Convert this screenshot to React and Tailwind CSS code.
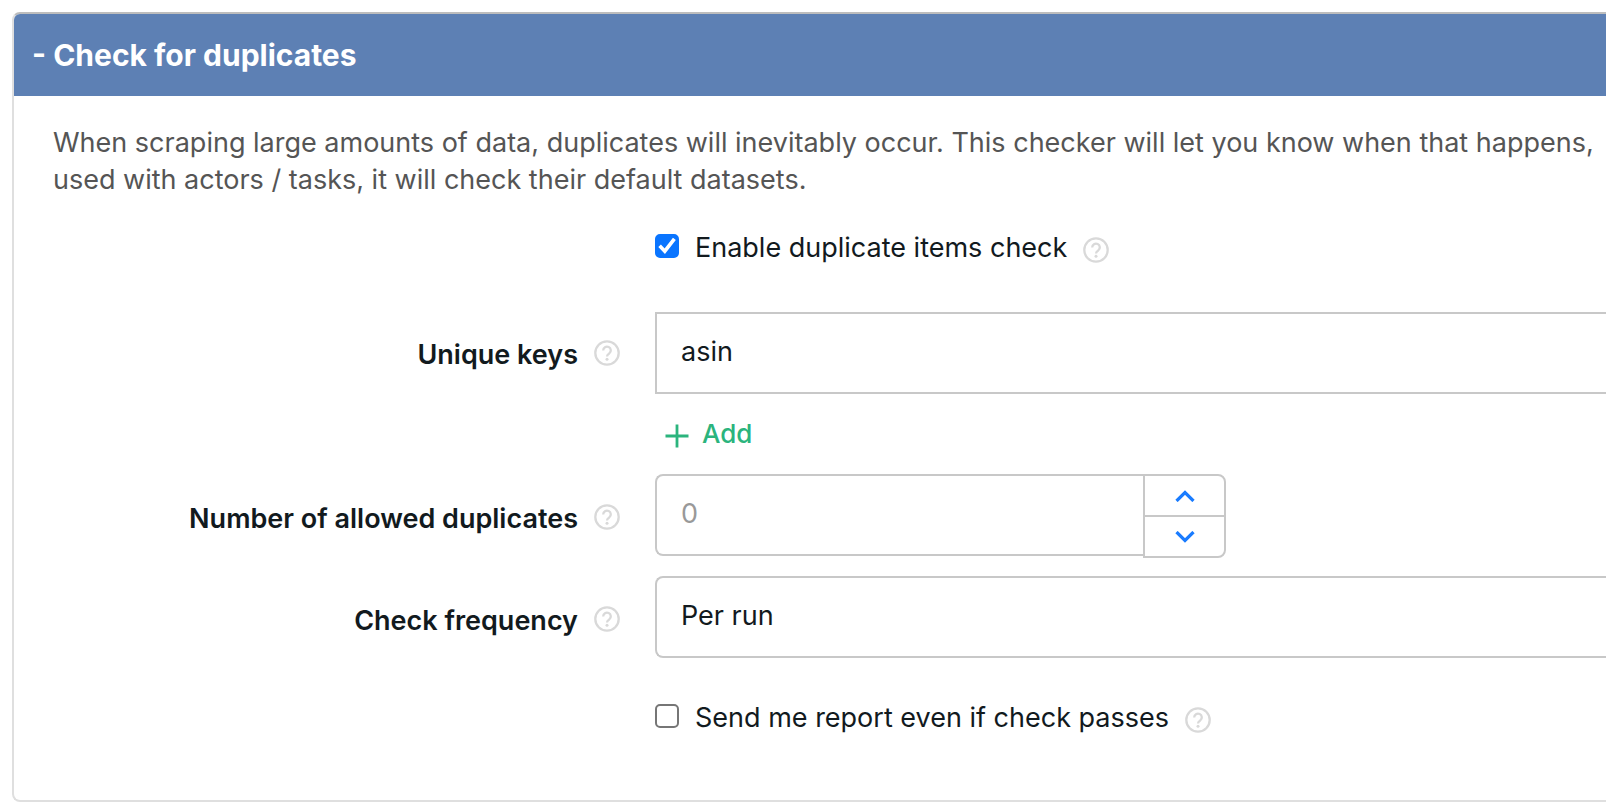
import { useState } from "react";

function HelpIcon() {
  return (
    <svg viewBox="0 0 26 26" className="size-[26px] shrink-0 text-[#d9d9d9]" fill="none" stroke="currentColor" aria-hidden="true">
      <circle cx="13" cy="13" r="11.7" strokeWidth="2.3" />
      <path d="M9.2 10.4a3.8 3.8 0 1 1 6.1 3c-1.5 1-2.3 1.5-2.3 3" strokeWidth="2.3" />
      <circle cx="13" cy="19.2" r="1.5" fill="currentColor" stroke="none" />
    </svg>
  );
}

function FieldLabel({ htmlFor, children }) {
  return (
    <div className="flex h-[82px] items-center justify-end gap-4 pr-[35px]">
      <label htmlFor={htmlFor} className="pt-1 font-semibold">
        {children}
      </label>
      <HelpIcon />
    </div>
  );
}

function CheckField({ id, checked, onChange, children }) {
  return (
    <div className="col-start-2 flex h-9 items-center">
      <input
        id={id}
        type="checkbox"
        checked={checked}
        onChange={onChange}
        className="peer size-6 shrink-0 appearance-none rounded-[5px] border-2 border-[#767676] bg-white checked:border-[#0a75ff] checked:bg-[#0a75ff]"
      />
      <svg viewBox="0 0 24 24" className="pointer-events-none -ml-6 size-6 shrink-0 opacity-0 peer-checked:opacity-100" fill="none" stroke="#fff" strokeWidth="3.6" aria-hidden="true">
        <path d="M4.6 11.8l5.2 5.4L19.4 4.8" />
      </svg>
      <label htmlFor={id} className="pt-1 pr-4 pl-4">
        {children}
      </label>
      <div className="pt-2">
        <HelpIcon />
      </div>
    </div>
  );
}

function Chevron({ d }) {
  return (
    <svg viewBox="0 0 20 12" className="h-3 w-5" fill="none" stroke="#1a7cff" strokeWidth="3.2" aria-hidden="true">
      <path d={d} />
    </svg>
  );
}

export default function App() {
  const [enabled, setEnabled] = useState(true);
  const [report, setReport] = useState(false);
  const [key, setKey] = useState("asin");
  const [allowed, setAllowed] = useState("");
  const step = (n) => setAllowed(String(Math.max(0, Number(allowed) + n)));

  return (
    <main className="overflow-hidden bg-white pt-3 pl-3 font-[Inter,sans-serif] text-[27px] leading-9 text-[#121a1e]">
      <section className="overflow-hidden rounded-l-lg border-2 border-r-0 border-[#dfdfdf] border-t-[#bdbdbd]">
        <h2 className="bg-[#5d80b4] text-[30px] leading-[82px] font-bold text-white">
          <button type="button" className="w-full pl-[18px] text-left">
            - Check for duplicates
          </button>
        </h2>
        <div className="pt-7 pb-[66px]">
          <p className="pl-[39px] leading-[37px] whitespace-nowrap text-[#555]">
            When scraping large amounts of data, duplicates will inevitably occur. This checker will let you know when that happens,
            <br />
            used with actors / tasks, it will check their default datasets.
          </p>
          <form className="grid grid-cols-[641px_1fr] pt-[30px]" onSubmit={(e) => e.preventDefault()}>
            <CheckField id="enable" checked={enabled} onChange={(e) => setEnabled(e.target.checked)}>
              Enable duplicate items check
            </CheckField>

            <div className="mt-12">
              <FieldLabel htmlFor="keys">Unique keys</FieldLabel>
            </div>
            <div className="mt-12">
              <input
                id="keys"
                value={key}
                onChange={(e) => setKey(e.target.value)}
                className="h-[82px] w-full border-2 border-r-0 border-[#c8c8c8] px-6 pb-1 outline-none"
              />
              <button type="button" className="mt-5 flex h-10 items-center gap-[13px] pl-2.5 text-[26px] font-medium text-[#2bb47d]">
                <svg viewBox="0 0 24 24" className="mt-1 size-6" stroke="currentColor" strokeWidth="2.8" aria-hidden="true">
                  <path d="M12 .5v23M.5 12h23" />
                </svg>
                Add
              </button>
            </div>

            <div className="mt-5 pt-0.5">
              <FieldLabel htmlFor="allowed">Number of allowed duplicates</FieldLabel>
            </div>
            <div className="mt-5 flex items-start">
              <input
                id="allowed"
                inputMode="numeric"
                placeholder="0"
                value={allowed}
                onChange={(e) => setAllowed(e.target.value)}
                className="h-[82px] w-[488px] rounded-l-lg border-2 border-r-0 border-[#c8c8c8] px-6 pb-1 outline-none placeholder:text-[#999]"
              />
              <div className="flex h-[84px] w-[83px] flex-col overflow-hidden rounded-r-lg border-2 border-[#c8c8c8]">
                <button type="button" aria-label="Increase" onClick={() => step(1)} className="flex flex-1 items-center justify-center border-b-2 border-[#c8c8c8]">
                  <Chevron d="M1.5 11L10 2.5l8.5 8.5" />
                </button>
                <button type="button" aria-label="Decrease" onClick={() => step(-1)} className="flex flex-1 items-center justify-center">
                  <Chevron d="M1.5 1L10 9.5l8.5-8.5" />
                </button>
              </div>
            </div>

            <div className="mt-[18px] pt-0.5">
              <FieldLabel htmlFor="frequency">Check frequency</FieldLabel>
            </div>
            <div className="mt-[18px]">
              <select
                id="frequency"
                className="h-[82px] w-full appearance-none rounded-l-lg border-2 border-r-0 border-[#c8c8c8] bg-white px-6 pb-0.5 outline-none"
              >
                <option>Per run</option>
              </select>
            </div>

            <div className="col-span-2 mt-[38px] grid grid-cols-subgrid">
              <CheckField id="report" checked={report} onChange={(e) => setReport(e.target.checked)}>
                Send me report even if check passes
              </CheckField>
            </div>
          </form>
        </div>
      </section>
    </main>
  );
}
